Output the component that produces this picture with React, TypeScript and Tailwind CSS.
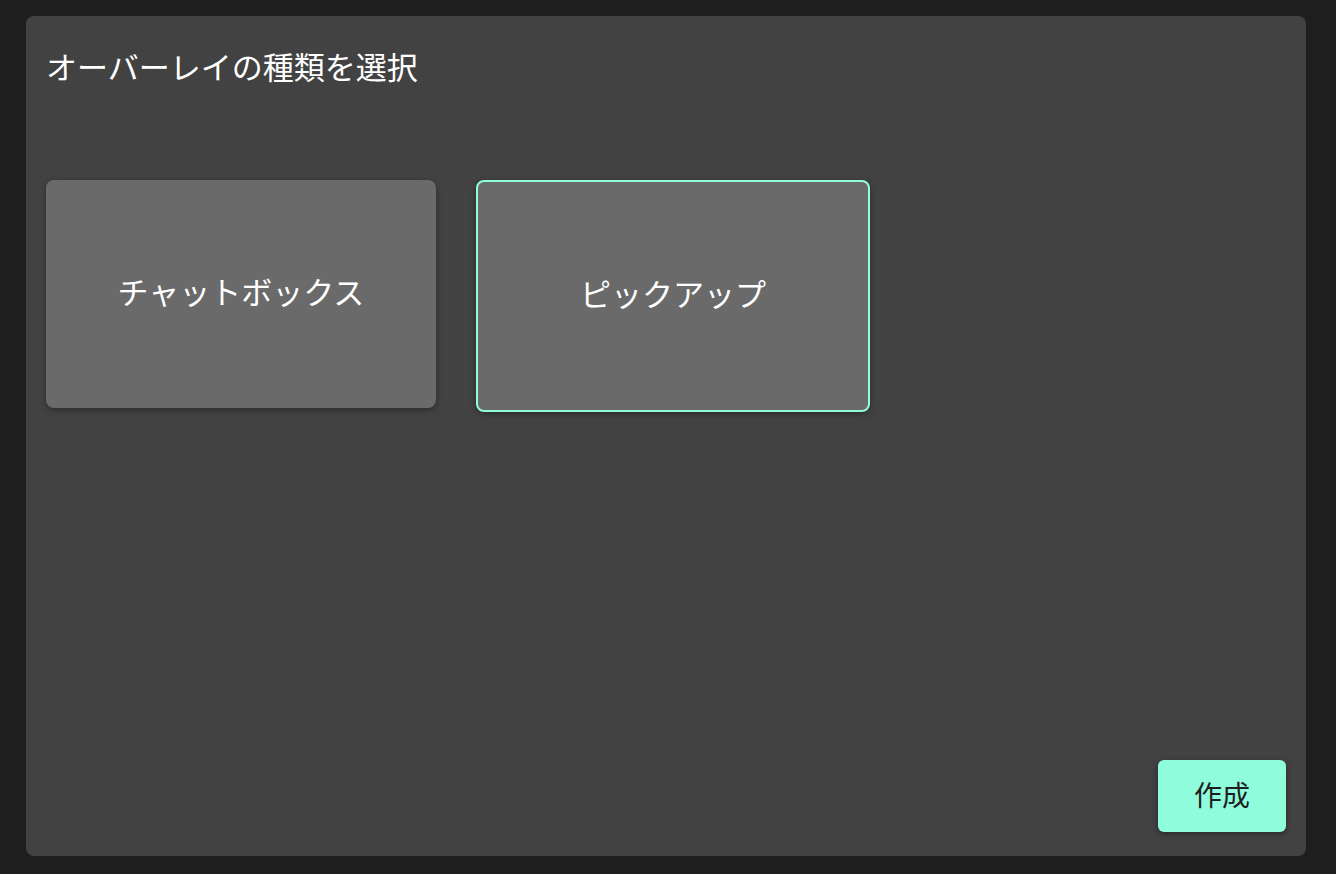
const options = [
  { id: 'chatbox', label: 'チャットボックス' },
  { id: 'pickup', label: 'ピックアップ' },
]

export default function App() {
  const selected = 'pickup'

  return (
    <div
      className="min-h-screen bg-[#1e1e1e] pt-[16px] pl-[26px]"
      style={{ fontFamily: '"Noto Sans CJK JP", "Noto Sans", sans-serif' }}
    >
      {/* Dialog panel */}
      <div className="w-[1280px] h-[840px] rounded-lg bg-[#424242] flex flex-col pt-[27px] pl-[20px] pr-[20px] pb-[24px]">
        <h1 className="text-[31px] leading-[45px] text-white">オーバーレイの種類を選択</h1>

        <div className="mt-[92px] flex items-start gap-10">
          {options.map((o) => {
            const active = o.id === selected
            return (
              <button
                key={o.id}
                className={`flex items-center justify-center rounded-lg bg-[#6a6a6a] text-white text-[31px] pb-[6px] shadow-[0_2px_6px_rgba(0,0,0,0.35)] ${
                  active ? 'w-[394px] h-[232px] border-2 border-[#8ffcdb]' : 'w-[390px] h-[228px]'
                }`}
              >
                {o.label}
              </button>
            )
          })}
        </div>

        <div className="flex-1" />

        <div className="flex justify-end">
          <button className="w-[128px] h-[72px] rounded-md bg-[#8ffcdb] text-[#1e1e1e] text-[28px] pb-[4px] shadow-[0_2px_6px_rgba(0,0,0,0.4)]">
            作成
          </button>
        </div>
      </div>
    </div>
  )
}
